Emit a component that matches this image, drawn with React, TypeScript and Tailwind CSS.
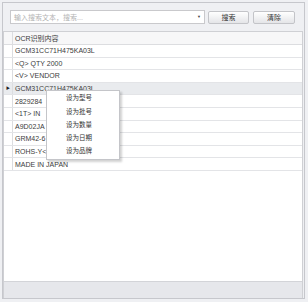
const rows = [
  "GCM31CC71H475KA03L",
  "<Q> QTY 2000",
  "<V> VENDOR",
  "GCM31CC71H475KA03L",
  "2829284",
  "<1T> IN",
  "A9D02JA",
  "GRM42-6",
  "ROHS-Y<",
  "MADE IN JAPAN",
];

const menuItems = ["设为型号", "设为批号", "设为数量", "设为日期", "设为品牌"];

const selected = 3;

export default function App() {
  return (
    <div
      className="relative h-[302px] w-[308px] overflow-hidden bg-[#eff0f3] pt-[2px] pl-[2px] text-[#3c3c3c]"
      style={{ fontFamily: '"Liberation Sans", "Noto Sans CJK SC", sans-serif' }}
    >
      <div className="flex h-[297px] w-[303px] flex-col border border-[#c6c7cc]">
        {/* Search toolbar */}
        <div className="flex h-[28px] shrink-0 items-center pl-[7px]">
          <div className="flex h-[14px] w-[195px] items-center justify-between border border-[#c9c9cc] bg-white pl-[3px] pr-[3px]">
            <span className="text-[7px] leading-none text-[#b4b4b4]">输入搜索文本，搜索...</span>
            <span className="text-[4px] leading-none text-[#444]">▼</span>
          </div>
          <button className="ml-[3px] h-[13px] w-[41px] rounded-[2px] border border-[#c3c4c8] bg-gradient-to-b from-white to-[#e4e5e8] text-[7px] leading-none text-[#333]">
            搜索
          </button>
          <button className="ml-[4px] h-[13px] w-[42px] rounded-[2px] border border-[#c3c4c8] bg-gradient-to-b from-white to-[#e4e5e8] text-[7px] leading-none text-[#333]">
            清除
          </button>
        </div>

        {/* Grid + footer */}
        <div className="mr-[1px] flex flex-1 flex-col border-x border-t border-[#cfd0d4]">
          <div className="flex-1 bg-white">
            <div className="flex h-[13px] border-b border-[#dcdde0] bg-[#f7f7f8]">
              <div className="w-[9px] border-r border-[#dcdde0]" />
              <div className="flex items-center pl-[2px] text-[7px] leading-none">OCR识别内容</div>
            </div>
            {rows.map((r, i) => (
              <div
                key={i}
                className={`flex h-[12.6px] border-b border-[#e3e4e7] ${i === selected ? "bg-[#e9ebee]" : "bg-white"}`}
              >
                <div className="flex w-[9px] items-center justify-center border-r border-[#dcdde0] text-[4px] leading-none text-[#222]">
                  {i === selected ? "▶" : ""}
                </div>
                <div className="flex items-center pl-[2px] text-[7px] leading-none">{r}</div>
              </div>
            ))}
          </div>
          <div className="h-[17px] shrink-0 border-t border-[#d3d4d8] bg-[#e6e7eb]" />
        </div>
      </div>

      {/* Context menu */}
      <div className="absolute left-[46px] top-[90px] w-[74px] border border-[#c4c5c9] bg-white py-[1px] shadow-[2px_2px_2px_rgba(0,0,0,0.18)]">
        {menuItems.map((m) => (
          <div key={m} className="flex h-[13.2px] items-center pl-[19px] text-[6.5px] leading-none text-[#333]">
            {m}
          </div>
        ))}
      </div>
    </div>
  );
}
